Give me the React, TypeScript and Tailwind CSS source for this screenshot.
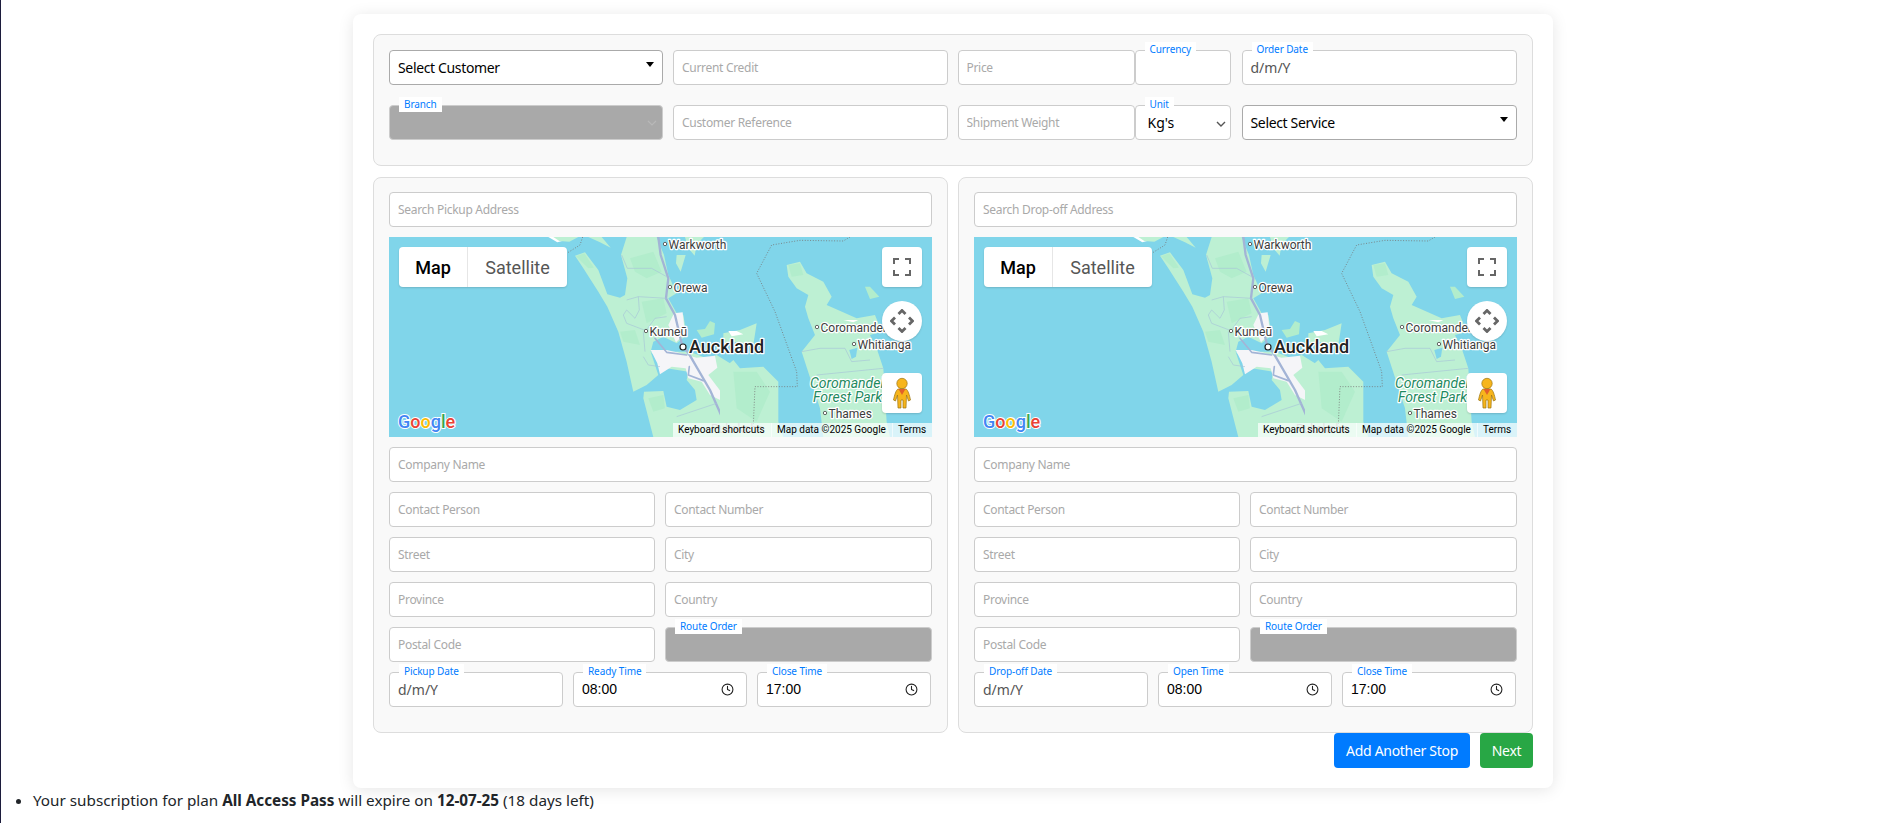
import { Clock } from 'lucide-react';

const inputCls =
  "h-[35px] w-full rounded border border-[#ccc] bg-white px-2 text-[12px] tracking-[-0.3px] text-[#555] outline-none placeholder:text-[#a9a9a9]";

function Floating({ text }: { text: string }) {
  return (
    <span className="absolute left-[10px] top-[-8px] z-10 h-[15px] bg-white px-[5px] text-[10px] leading-[14px] tracking-[-0.1px] text-[#007bff]">
      {text}
    </span>
  );
}

function TextField({ placeholder, className = "" }: { placeholder: string; className?: string }) {
  return <input placeholder={placeholder} className={`${inputCls} ${className}`} />;
}

function CaretSelect({ text }: { text: string }) {
  return (
    <div className="relative flex h-[35px] items-center rounded border border-[#aaa] bg-white pb-px pl-2 text-[14px] tracking-[-0.35px] text-black">
      {text}
      <span className="absolute right-[8px] top-[11px] h-0 w-0 border-x-[4.5px] border-t-[5px] border-x-transparent border-t-black" />
    </div>
  );
}

function DateField({ label }: { label: string }) {
  return (
    <div className="relative">
      <Floating text={label} />
      <div className="flex h-[35px] items-center rounded border border-[#ccc] bg-white pl-2 text-[14px] text-[#555]">
        d/m/Y
      </div>
    </div>
  );
}

function TimeField({ label, value }: { label: string; value: string }) {
  return (
    <div className="relative">
      <Floating text={label} />
      <div className="flex h-[35px] items-center justify-between rounded border border-[#ccc] bg-white pl-2 pr-[12px] font-['Liberation_Sans',sans-serif] text-[14px] text-black">
        {value}
        <Clock size={13} strokeWidth={2} className="text-[#222]" />
      </div>
    </div>
  );
}

const halo = { paintOrder: "stroke" as const, stroke: "#fff", strokeWidth: 2.5, strokeLinejoin: "round" as const };

function Place({ x, y, dx, dy, name }: { x: number; y: number; dx: number; dy: number; name: string }) {
  return (
    <>
      <circle cx={x} cy={y} r={1.7} fill="#fff" stroke="#555" strokeWidth={0.9} />
      <text x={x + dx} y={y + dy} fontSize={12} fill="#3c3c3c" style={halo}>
        {name}
      </text>
    </>
  );
}

function MapView() {
  return (
    <div className="relative h-[200px] overflow-hidden bg-[#80d5ea]">
      <svg viewBox="0 0 543 200" className="block h-[200px] w-full font-['Roboto',sans-serif]">
        {/* west side */}
        <g transform="translate(131,-2) scale(.3333)">
          <path d="M85,6 L112,22 L138,15 L150,6 Z" fill="#fff" />
          <path d="M100,6 L175,6 L148,20 L118,18 Z M205,6 L245,6 L272,38 L240,22 Z M495,6 L552,6 L530,28 L524,62 L505,40 Z M470,60 L497,60 L482,110 L468,85 Z" fill="#bdf0d3" />
          <path d="M165,62 L195,52 L235,105 L262,178 L300,188 L315,180 L322,130 L303,60 L320,6 L410,6 L432,60 L445,120 L470,175 L445,190 L470,235 L490,240 L500,300 L470,325 L430,305 L400,320 L392,350 L415,420 L380,450 L340,470 L320,380 L295,290 L262,215 L235,170 L190,100 Z" fill="#bdf0d3" />
          <path d="M392,350 L460,350 L510,350 L560,370 L590,360 L630,385 L630,606 L400,606 L370,490 L372,470 L430,468 L440,515 L480,525 L530,495 L525,465 L500,435 L505,410 L440,400 Z" fill="#bdf0d3" />
          <path d="M530,285 L555,282 L570,258 L585,265 L582,298 L545,308 Z" fill="#b2edcc" />
          <path d="M168,64 L193,55 L222,98 L205,100 Z M330,70 L400,50 L425,110 L380,130 L345,110 Z M365,200 L430,190 L440,235 L380,265 Z M300,290 L345,285 L360,330 L310,320 Z M385,490 L430,480 L435,520 L400,530 Z" fill="#b2edcc" />
          <path d="M462,235 L488,232 L495,295 L468,322 L445,270 Z M392,345 L440,345 L470,352 L530,368 L585,362 L592,398 L565,420 L603,470 L605,497 L570,480 L545,440 L505,430 L497,400 L455,395 L420,418 L412,385 Z" fill="#f5f5f8" />
          <g fill="none" stroke="#a3b4d6" strokeLinecap="round" strokeLinejoin="round">
            <path d="M415,6 L422,60 L445,130 L438,190 L465,240 L485,325 L510,362 L570,465 L610,555 L628,606" strokeWidth="7" />
            <path d="M405,310 L440,352 L500,360 M508,395 L505,420 L550,437" strokeWidth="5" />
          </g>
          <g fill="none" stroke="#a7c6d8" strokeWidth="2">
            <path d="M305,60 L322,100 L395,100 L440,125 M320,195 L355,185 L358,225 L345,250 L320,225 L310,240 L320,265 L378,287 M355,185 L440,190 M440,245 L405,250 L378,287 M370,290 L375,350 M370,365 L385,390 L420,395 M470,545 L590,505" />
          </g>
          <path d="M188,6 L180,30 L140,55" fill="none" stroke="#777" strokeWidth="2.5" strokeDasharray="3 5" />
        </g>
        {/* east side */}
        <g transform="translate(331,-2) scale(.3333)">
          <path d="M200,90 L240,80 L260,115 L310,140 L335,185 L320,210 L410,250 L465,240 L485,290 L450,300 L470,340 L490,400 L500,560 L510,606 L310,606 L300,520 L245,350 L285,300 L265,250 L255,215 L265,180 L230,160 L205,125 Z" fill="#bdf0d3" />
          <path d="M435,155 L450,155 L478,185 L450,192 Z" fill="#b2edcc" />
          <path d="M0,410 L40,375 L60,400 L130,395 L175,440 L175,560 L190,606 L0,606 Z M10,295 L60,285 L110,265 L100,330 L40,320 L10,325 Z" fill="#bdf0d3" />
          <path d="M40,410 L110,410 L150,470 L110,560 L50,520 Z M205,90 L240,85 L250,120 L215,125 Z" fill="#b2edcc" />
          <path d="M25,288 L50,288 L70,298 L35,304 Z M370,255 L415,255 L400,262 Z" fill="#fff" />
          <path d="M388,345 L412,338 L408,365 L395,372 Z" fill="#80d5ea" />
          <path d="M245,350 L300,340 L375,340 L395,380 L450,375 M290,420 L490,400" fill="none" stroke="#a7c6d8" strokeWidth="2" />
          <path d="M390,6 L370,18 L240,16 L155,30 L110,115 L165,230 L230,410 L232,455 L105,455 L100,570" fill="none" stroke="#777" strokeWidth="2.5" strokeDasharray="3 5" />
        </g>

        <Place x={276} y={7} dx={3.5} dy={5} name="Warkworth" />
        <Place x={281} y={50} dx={3.5} dy={4.5} name="Orewa" />
        <Place x={257} y={94} dx={3.5} dy={4.5} name="Kumeū" />
        <circle cx={294} cy={110} r={3} fill="#fff" stroke="#222" strokeWidth={1.2} />
        <text x={300} y={116} fontSize={18} fontWeight={500} fill="#222" style={halo}>
          Auckland
        </text>
        <Place x={428} y={90} dx={3.5} dy={4.5} name="Coromandel" />
        <Place x={465} y={107} dx={3.5} dy={4.5} name="Whitianga" />
        <text x={421} y={151} fontSize={14} fontStyle="italic" fill="#1e8a5e" style={halo}>
          Coromandel
        </text>
        <text x={424} y={165} fontSize={14} fontStyle="italic" fill="#1e8a5e" style={halo}>
          Forest Park
        </text>
        <Place x={436} y={176} dx={3.5} dy={4.5} name="Thames" />
        <text x={322} y={196} fontSize={12} fill="#9a9a9a">
          Pukekohe
        </text>

        {/* google logo */}
        <text x={9} y={191} fontSize={18} fontWeight={500} style={{ paintOrder: "stroke", stroke: "#fff", strokeWidth: 2 }}>
          <tspan fill="#4285f4">G</tspan>
          <tspan fill="#ea4335">o</tspan>
          <tspan fill="#fbbc05">o</tspan>
          <tspan fill="#4285f4">g</tspan>
          <tspan fill="#34a853">l</tspan>
          <tspan fill="#ea4335">e</tspan>
        </text>
      </svg>

      {/* map type */}
      <div className="absolute left-[10px] top-[10px] flex h-[40px] w-[168px] rounded-sm bg-white font-['Roboto',sans-serif] text-[18px] shadow-[0_1px_2px_rgba(0,0,0,.15)]">
        <div className="flex w-[69px] items-center justify-center border-r border-[#e6e6e6] font-medium text-black">Map</div>
        <div className="flex flex-1 items-center justify-center text-[#565656]">Satellite</div>
      </div>

      {/* fullscreen */}
      <div className="absolute right-[10px] top-[10px] flex h-[40px] w-[40px] items-center justify-center rounded-sm bg-white shadow-[0_1px_2px_rgba(0,0,0,.15)]">
        <svg width="18" height="18" viewBox="0 0 18 18" fill="none" stroke="#666" strokeWidth="2">
          <path d="M1,6 V1 H6 M12,1 H17 V6 M17,12 V17 H12 M6,17 H1 V12" />
        </svg>
      </div>

      {/* pan */}
      <div className="absolute right-[10px] top-[64px] flex h-[40px] w-[40px] items-center justify-center rounded-full bg-white shadow-[0_1px_2px_rgba(0,0,0,.15)]">
        <svg width="24" height="24" viewBox="0 0 24 24" fill="none" stroke="#666" strokeWidth="2.8">
          <path d="M8.5,5 L12,1.5 L15.5,5 M19,8.5 L22.5,12 L19,15.5 M15.5,19 L12,22.5 L8.5,19 M5,15.5 L1.5,12 L5,8.5" />
        </svg>
      </div>

      {/* pegman */}
      <div className="absolute right-[10px] top-[136px] flex h-[40px] w-[40px] items-center justify-center rounded-sm bg-white shadow-[0_1px_2px_rgba(0,0,0,.15)]">
        <svg width="40" height="40" viewBox="0 0 40 40">
          <circle cx="20" cy="10.5" r="5.2" fill="#f7b51c" stroke="#9a7412" strokeWidth=".7" />
          <path d="M16,16 H24 C26,17 27.5,22 28.5,27 L26.5,28 L24.5,22 L24,35 H21 V27 H19 V35 H16 L15.5,22 L13.5,28 L11.5,27 C12.5,22 14,17 16,16 Z" fill="#f7b51c" stroke="#9a7412" strokeWidth=".7" />
          <path d="M16.5,16 H23.5 L20,22 Z" fill="#e2602a" />
        </svg>
      </div>

      {/* attribution */}
      <div className="absolute bottom-0 right-0 flex h-[14px] bg-white/70 font-['Roboto',sans-serif] text-[10px] leading-[14px] text-black">
        <span className="w-[98px] pl-[5px]">Keyboard shortcuts</span>
        <span className="w-[121px] border-l border-white/60 pl-[5px]">Map data ©2025 Google</span>
        <span className="w-[40px] border-l border-white/60 pl-[5px]">Terms</span>
      </div>
    </div>
  );
}

function StopPanel({
  search,
  dateLabel,
  readyLabel,
}: {
  search: string;
  dateLabel: string;
  readyLabel: string;
}) {
  return (
    <div className="h-[556px] rounded-lg border border-[#ddd] bg-[#f9f9f9] px-[15px] pt-[14px]">
      <TextField placeholder={search} />
      <div className="mt-[10px]">
        <MapView />
      </div>
      <div className="mt-[10px] flex flex-col gap-[10px]">
        <TextField placeholder="Company Name" />
        <div className="grid grid-cols-[266px_1fr] gap-[10px]">
          <TextField placeholder="Contact Person" />
          <TextField placeholder="Contact Number" />
          <TextField placeholder="Street" />
          <TextField placeholder="City" />
          <TextField placeholder="Province" />
          <TextField placeholder="Country" />
          <TextField placeholder="Postal Code" />
          <div className="relative">
            <Floating text="Route Order" />
            <div className="h-[35px] rounded border border-[#ccc] bg-[#a9a9a9]" />
          </div>
        </div>
        <div className="grid grid-cols-3 gap-[10px] pr-px">
          <DateField label={dateLabel} />
          <TimeField label={readyLabel} value="08:00" />
          <TimeField label="Close Time" value="17:00" />
        </div>
      </div>
    </div>
  );
}

export default function App() {
  return (
    <div className="h-[823px] overflow-hidden border-l border-[#1c1c3c] bg-white font-['Noto_Sans',sans-serif]">
      <div className="ml-[352px] mt-0 w-[1200px] pt-[14px]">
        <div className="h-[774px] rounded-lg bg-white px-[20px] pt-[20px] shadow-[0_2px_16px_rgba(0,0,0,.1)]">
          {/* order details */}
          <div className="h-[132px] rounded-lg border border-[#ddd] bg-[#f9f9f9] px-[15px] pt-[15px]">
            <div className="grid grid-cols-[274px_274.5px_274px_275px] gap-x-[10px] gap-y-[20px]">
              <CaretSelect text="Select Customer" />
              <TextField placeholder="Current Credit" />
              <div className="flex pr-px">
                <TextField placeholder="Price" className="flex-1" />
                <div className="relative w-[96px] shrink-0">
                  <Floating text="Currency" />
                  <div className="h-[35px] rounded border border-[#ccc] bg-white" />
                </div>
              </div>
              <DateField label="Order Date" />

              <div className="relative">
                <Floating text="Branch" />
                <div className="relative h-[35px] rounded border border-[#ccc] bg-[#a9a9a9]">
                  <svg className="absolute right-[5px] top-[12px]" width="10" height="10" viewBox="0 0 10 10" fill="none" stroke="#b8b8b8" strokeWidth="1.2">
                    <path d="M1,3 L5,7 L9,3" />
                  </svg>
                </div>
              </div>
              <TextField placeholder="Customer Reference" />
              <div className="flex pr-px">
                <TextField placeholder="Shipment Weight" className="flex-1" />
                <div className="relative w-[96px] shrink-0">
                  <Floating text="Unit" />
                  <div className="relative flex h-[35px] items-center rounded border border-[#ccc] bg-white pl-[12px] text-[14px] text-black">
                    Kg's
                    <svg className="absolute right-[4px] top-[13px]" width="10" height="10" viewBox="0 0 10 10" fill="none" stroke="#555" strokeWidth="1.4">
                      <path d="M1,3 L5,7 L9,3" />
                    </svg>
                  </div>
                </div>
              </div>
              <CaretSelect text="Select Service" />
            </div>
          </div>

          {/* stops */}
          <div className="mt-[11px] grid grid-cols-2 gap-[10px]">
            <StopPanel search="Search Pickup Address" dateLabel="Pickup Date" readyLabel="Ready Time" />
            <StopPanel search="Search Drop-off Address" dateLabel="Drop-off Date" readyLabel="Open Time" />
          </div>

          <div className="flex justify-end gap-[10px]">
            <button className="h-[35px] w-[136px] rounded bg-[#007bff] text-[14px] tracking-[-0.3px] text-white">Add Another Stop</button>
            <button className="h-[35px] w-[53px] rounded bg-[#28a745] text-[14px] tracking-[-0.3px] text-white">Next</button>
          </div>
        </div>
      </div>

      <ul className="mt-[2px] list-disc pl-[32px] text-[15.25px] leading-[21px] text-[#212529]">
        <li>
          Your subscription for plan <b>All Access Pass</b> will expire on <b>12-07-25</b> (18 days left)
        </li>
      </ul>
    </div>
  );
}
